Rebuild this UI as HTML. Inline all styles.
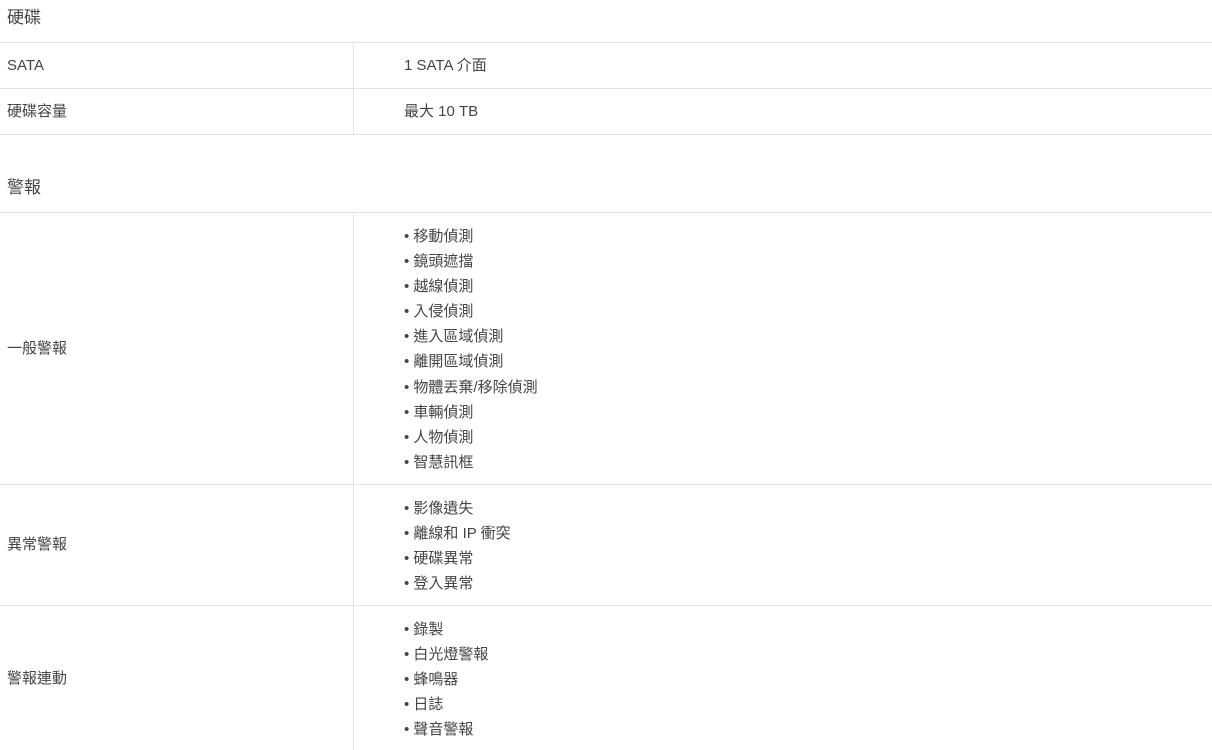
<!DOCTYPE html>
<html><head><meta charset="utf-8"><style>
body{margin:0;width:1212px;height:750px;background:#fff;font-family:"Liberation Sans","Noto Sans CJK TC",sans-serif;color:#454545;font-size:15px;position:relative;overflow:hidden}
.t{position:absolute;white-space:nowrap;line-height:20px}
.h{position:absolute;left:0;width:1212px;height:1px;background:#e4e4e4}
.v{position:absolute;left:353px;width:1px;background:#e4e4e4}
.h2{font-size:17px}
</style></head><body>
<div class="t h2" style="left:7px;top:8px">硬碟</div>
<div class="h" style="top:42px"></div>
<div class="t" style="left:7px;top:56px">SATA</div>
<div class="t" style="left:404px;top:56px">1 SATA 介面</div>
<div class="h" style="top:88px"></div>
<div class="t" style="left:7px;top:102px">硬碟容量</div>
<div class="t" style="left:404px;top:102px">最大 10 TB</div>
<div class="h" style="top:134px"></div>
<div class="v" style="top:42px;height:92px"></div>
<div class="t h2" style="left:7px;top:178px">警報</div>
<div class="h" style="top:212px"></div>
<div class="t" style="left:7px;top:339px">一般警報</div>
<div class="t" style="left:404px;top:224px;line-height:25.1px">• 移動偵測<br>• 鏡頭遮擋<br>• 越線偵測<br>• 入侵偵測<br>• 進入區域偵測<br>• 離開區域偵測<br>• 物體丟棄/移除偵測<br>• 車輛偵測<br>• 人物偵測<br>• 智慧訊框</div>
<div class="h" style="top:484px"></div>
<div class="t" style="left:7px;top:535px">異常警報</div>
<div class="t" style="left:404px;top:496px;line-height:25.1px">• 影像遺失<br>• 離線和 IP 衝突<br>• 硬碟異常<br>• 登入異常</div>
<div class="h" style="top:605px"></div>
<div class="t" style="left:7px;top:669px">警報連動</div>
<div class="t" style="left:404px;top:617px;line-height:25.1px">• 錄製<br>• 白光燈警報<br>• 蜂鳴器<br>• 日誌<br>• 聲音警報</div>
<div class="v" style="top:212px;height:538px"></div>
</body></html>
